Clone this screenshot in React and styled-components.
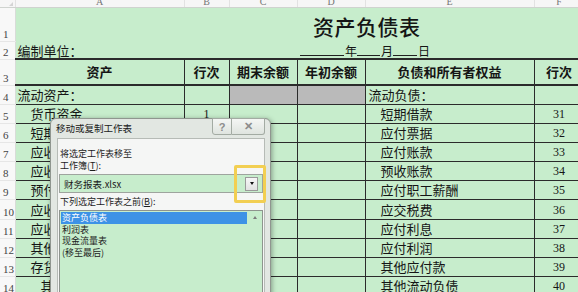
import React from 'react';
import styled, { createGlobalStyle } from 'styled-components';

const GlobalStyle = createGlobalStyle`
  html, body {
    margin: 0;
    padding: 0;
    background: #ffffff;
  }
  body {
    width: 578px;
    height: 292px;
    overflow: hidden;
    font-family: "Noto Sans CJK SC", "Liberation Sans", sans-serif;
  }
`;

const Page = styled.div`
  position: relative;
  width: 578px;
  height: 292px;
  overflow: hidden;
  background: #c7edcc;
`;

const Sheet = styled.table`
  border-collapse: collapse;
  table-layout: fixed;
  width: 584px;
  color: #151515;
`;

const ColHead = styled.th`
  height: 7px;
  padding: 0;
  background: #f6f6f6;
  border-bottom: 1px solid #cfd3cf;
  border-right: 1px solid #e2e2e2;
  font-family: "Liberation Serif", serif;
  font-weight: 400;
  font-size: 10px;
  color: #777;
`;

const ColLetter = styled.div`
  height: 7px;
  overflow: hidden;
  line-height: 3px;
  text-align: center;
`;

const Corner = styled(ColHead)`
  position: relative;
  &::after {
    content: '';
    position: absolute;
    right: 2px;
    bottom: 1px;
    border-left: 4px solid transparent;
    border-bottom: 4px solid #d4d4d4;
  }
`;

const Row = styled.tr`
  height: ${p => p.$h}px;
`;

const RowNum = styled.th`
  padding: 0 0 0 3px;
  background: #f8f8f8;
  border-right: 1px solid #d8dcd8;
  border-bottom: 1px solid #e6e6e6;
  font-family: "Liberation Serif", serif;
  font-weight: 400;
  font-size: 11px;
  color: #444;
  text-align: left;
  vertical-align: bottom;
  line-height: 13px;
`;

const Cell = styled.td`
  padding: 0 2px 0 ${p => p.$indent || 2}px;
  font-size: 13px;
  font-weight: ${p => (p.$bold ? 700 : 400)};
  text-align: ${p => p.$align || 'left'};
  white-space: nowrap;
  overflow: hidden;
  line-height: 16px;
  background: ${p => (p.$grey ? '#bababa' : 'transparent')};
  border: ${p => (p.$plain ? 'none' : '1px solid #2b2b2b')};
  border-left: ${p => (p.$first ? 'none' : undefined)};
  border-top-width: ${p => (p.$thick ? '2px' : undefined)};
  border-bottom-width: ${p => (p.$thick ? '2px' : undefined)};
`;

const Num = styled(Cell)`
  font-family: "Liberation Serif", serif;
  font-size: 12px;
  text-align: center;
`;

const TitleCell = styled.td`
  padding: 0 0 0 84px;
  vertical-align: top;
  font-size: 21px;
  font-weight: 500;
  letter-spacing: 0.5px;
  line-height: 30px;
  padding-top: 3px;
  border: none;
`;

const DateCell = styled.td`
  padding: 0 0 0 71px;
  font-size: 12px;
  line-height: 14px;
  vertical-align: bottom;
  white-space: nowrap;
  border: none;
  border-bottom: 2px solid #2b2b2b;
`;

const Blank = styled.span`
  display: inline-block;
  width: ${p => p.$w}px;
  height: 1px;
  margin: 0 1px 2px 0;
  background: #222;
  vertical-align: bottom;
`;

const UnitCell = styled.td`
  padding: 0 0 0 2px;
  font-size: 13px;
  vertical-align: bottom;
  line-height: 15px;
  white-space: nowrap;
  border: none;
  border-bottom: 2px solid #2b2b2b;
`;

/* dialog */

const Dialog = styled.div`
  position: absolute;
  left: 50px;
  top: 118px;
  width: 219px;
  height: 190px;
  background: #e2e7e2;
  border: 1px solid #8f968f;
  border-radius: 6px 6px 0 0;
  box-shadow: 1px 1px 5px rgba(0, 0, 0, 0.35);
  display: flex;
  flex-direction: column;
  font-size: 9px;
  color: #1c1c1c;
`;

const TitleBar = styled.div`
  height: 19px;
  display: flex;
  align-items: flex-start;
  padding-left: 5px;
`;

const TitleText = styled.span`
  line-height: 19px;
  font-size: 9.5px;
  color: #202020;
`;

const TitleButtons = styled.div`
  margin: -1px 5px 0 auto;
  display: flex;
`;

const TitleButton = styled.div`
  width: ${p => p.$w}px;
  height: 15px;
  border: 1px solid #a3aba3;
  border-left-width: ${p => (p.$joined ? 0 : 1)}px;
  border-radius: ${p => (p.$joined ? '0 0 3px 0' : '0 0 0 3px')};
  background: linear-gradient(#f4f6f4, #dfe4df);
  display: flex;
  align-items: center;
  justify-content: center;
  font-family: "Liberation Sans", sans-serif;
  font-size: 11px;
  font-weight: 700;
  color: #8c8c8c;
`;

const Client = styled.div`
  flex: 1;
  margin: 0 5px 0 6px;
  padding: 9px 1px 0 1px;
  background: #f5f6f5;
  border: 1px solid #b6bbb6;
  border-bottom: none;
  display: flex;
  flex-direction: column;
`;

const Label = styled.div`
  line-height: 12px;
  margin-top: ${p => p.$gap || 0}px;
  padding-left: 1px;
`;

const Combo = styled.div`
  margin-top: 2px;
  height: 17px;
  background: #c7edcc;
  border: 1px solid #9ea49e;
  display: flex;
  align-items: center;
  padding-left: 4px;
`;

const ComboText = styled.span`
  flex: 1;
  font-size: 9.5px;
`;

const DropButton = styled.div`
  width: 11px;
  height: 12px;
  margin-right: 4px;
  background: linear-gradient(#f6f6f6, #e2e2e2);
  border: 1px solid #9a9a9a;
  display: flex;
  align-items: center;
  justify-content: center;
  &::after {
    content: '';
    border-left: 2.5px solid transparent;
    border-right: 2.5px solid transparent;
    border-top: 3px solid #111;
  }
`;

const Highlight = styled.div`
  position: absolute;
  left: 183px;
  top: 46px;
  width: 26px;
  height: 32px;
  border: 3.5px solid #f2cf52;
  border-radius: 2px;
`;

const ListBox = styled.div`
  margin-top: 2px;
  flex: 1;
  background: #c7edcc;
  border: 1px solid #8e948e;
  border-bottom: none;
  display: flex;
`;

const ListItems = styled.div`
  flex: 1;
  padding: 1px 0 0 1px;
`;

const ListItem = styled.div`
  line-height: 11.5px;
  height: 11.5px;
  padding-left: 1px;
  background: ${p => (p.$selected ? '#3d92e6' : 'transparent')};
  color: ${p => (p.$selected ? '#ffffff' : '#1c1c1c')};
`;

const ScrollBar = styled.div`
  width: 15px;
  display: flex;
  justify-content: center;
  padding-top: 5px;
  &::before {
    content: '';
    width: 0;
    height: 0;
    border-left: 2.5px solid transparent;
    border-right: 2.5px solid transparent;
    border-bottom: 3px solid #7c7c7c;
  }
`;

const cols = [15, 169, 45, 68, 68, 169, 50];
const letters = ['A', 'B', 'C', 'D', 'E', 'F'];

const rows = [
  ['货币资金', '1', '短期借款', '31'],
  ['短期投资', '2', '应付票据', '32'],
  ['应收票据', '3', '应付账款', '33'],
  ['应收账款', '4', '预收账款', '34'],
  ['预付账款', '5', '应付职工薪酬', '35'],
  ['应收股利', '6', '应交税费', '36'],
  ['应收利息', '7', '应付利息', '37'],
  ['其他应收款', '8', '应付利润', '38'],
  ['存货', '9', '其他应付款', '39'],
  ['其中：消耗性生物资产', '10', '其他流动负债', '40'],
];

const sheets = ['资产负债表', '利润表', '现金流量表', '(移至最后)'];

const App = () => (
  <Page>
    <GlobalStyle />
    <Sheet>
      <colgroup>
        {cols.map((w, i) => <col key={i} style={{ width: w }} />)}
      </colgroup>
      <thead>
        <tr>
          <Corner />
          {letters.map(l => (
            <ColHead key={l}><ColLetter>{l}</ColLetter></ColHead>
          ))}
        </tr>
      </thead>
      <tbody>
        <Row $h={33}>
          <RowNum>1</RowNum>
          <Cell $plain />
          <Cell $plain />
          <TitleCell colSpan={4}>资产负债表</TitleCell>
        </Row>
        <Row $h={18}>
          <RowNum>2</RowNum>
          <UnitCell>编制单位：</UnitCell>
          <UnitCell />
          <DateCell colSpan={4}>
            <Blank $w={44} />年<Blank $w={23} />月<Blank $w={24} />日
          </DateCell>
        </Row>
        <Row $h={26}>
          <RowNum>3</RowNum>
          <Cell $first $bold $thick $align="center">资产</Cell>
          <Cell $bold $thick $align="center">行次</Cell>
          <Cell $bold $thick $align="center">期末余额</Cell>
          <Cell $bold $thick $align="center">年初余额</Cell>
          <Cell $bold $thick $align="center">负债和所有者权益</Cell>
          <Cell $bold $thick $align="center">行次</Cell>
        </Row>
        <Row $h={19}>
          <RowNum>4</RowNum>
          <Cell $first>流动资产：</Cell>
          <Cell />
          <Cell $grey />
          <Cell $grey />
          <Cell $indent={3}>流动负债：</Cell>
          <Cell />
        </Row>
        {rows.map(([a, b, e, f], i) => (
          <Row $h={19.2} key={i}>
            <RowNum>{i + 5}</RowNum>
            <Cell $first $indent={i === 9 ? 25 : 15}>{a}</Cell>
            <Num>{b}</Num>
            <Cell />
            <Cell />
            <Cell $indent={15}>{e}</Cell>
            <Num>{f}</Num>
          </Row>
        ))}
      </tbody>
    </Sheet>

    <Dialog>
      <TitleBar>
        <TitleText>移动或复制工作表</TitleText>
        <TitleButtons>
          <TitleButton $w={18}>?</TitleButton>
          <TitleButton $w={32} $joined>✕</TitleButton>
        </TitleButtons>
      </TitleBar>
      <Client>
        <Label>将选定工作表移至</Label>
        <Label>工作簿(<u>T</u>):</Label>
        <Combo>
          <ComboText>财务报表.xlsx</ComboText>
          <DropButton />
        </Combo>
        <Label $gap={3}>下列选定工作表之前(<u>B</u>):</Label>
        <ListBox>
          <ListItems>
            {sheets.map((s, i) => (
              <ListItem key={s} $selected={i === 0}>{s}</ListItem>
            ))}
          </ListItems>
          <ScrollBar />
        </ListBox>
      </Client>
      <Highlight />
    </Dialog>
  </Page>
);

export default App;
